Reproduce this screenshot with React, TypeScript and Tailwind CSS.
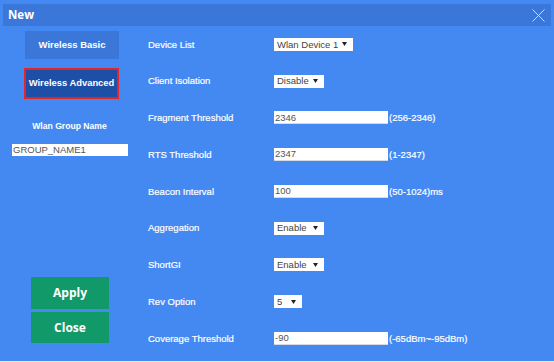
const ARIAL = "font-['Liberation_Sans',Arial,sans-serif]";
const OPEN = "font-['Open_Sans','Segoe_UI',sans-serif]";

type Row =
  | { label: string; kind: 'select'; value: string; width: string }
  | { label: string; kind: 'input'; value: string; hint: string };

const ROWS: Row[] = [
  { label: 'Device List', kind: 'select', value: 'Wlan Device 1', width: 'w-[79px]' },
  { label: 'Client Isolation', kind: 'select', value: 'Disable', width: 'w-[50px]' },
  { label: 'Fragment Threshold', kind: 'input', value: '2346', hint: '(256-2346)' },
  { label: 'RTS Threshold', kind: 'input', value: '2347', hint: '(1-2347)' },
  { label: 'Beacon Interval', kind: 'input', value: '100', hint: '(50-1024)ms' },
  { label: 'Aggregation', kind: 'select', value: 'Enable', width: 'w-[50px]' },
  { label: 'ShortGI', kind: 'select', value: 'Enable', width: 'w-[50px]' },
  { label: 'Rev Option', kind: 'select', value: '5', width: 'w-[28px]' },
  { label: 'Coverage Threshold', kind: 'input', value: '-90', hint: '(-65dBm~-95dBm)' },
];

function Arrow() {
  return (
    <svg width="5" height="4" viewBox="0 0 5 4" className="shrink-0">
      <path d="M0 0H5L2.5 4Z" fill="#222" />
    </svg>
  );
}

function Field({ row }: { row: Row }) {
  if (row.kind === 'select') {
    return (
      <div
        className={`${row.width} h-[13px] bg-white flex items-center justify-between pl-[3px] pr-[6px] text-[9.5px] leading-none text-[#444]`}
      >
        <span>{row.value}</span>
        <Arrow />
      </div>
    );
  }
  return (
    <div className="flex items-center">
      <div className="w-[114px] h-[13px] bg-white border-b border-[#d5dbe5] flex items-center pl-[1px] text-[9.5px] leading-none text-[#555]">
        {row.value}
      </div>
      <span className="ml-[1px] text-[9.5px] leading-none text-white [-webkit-text-stroke:0.2px_white]">{row.hint}</span>
    </div>
  );
}

export default function App() {
  return (
    <div className={`w-[554px] h-[362px] bg-[#4488f2] flex flex-col pt-[4px] border-b border-[#dbe7fb] ${ARIAL}`}>
      <div className="mx-[3px] h-[22px] bg-[#3b77d8] flex items-center justify-between pl-[5px] pr-[6px]">
        <span className={`${OPEN} text-[11.5px] font-bold text-white leading-none`}>New</span>
        <svg width="13" height="13" viewBox="0 0 13 13" className="mt-[1px]">
          <path d="M0.5 0.5L12.5 12.5M12.5 0.5L0.5 12.5" stroke="#c9dbf6" strokeWidth="1" />
        </svg>
      </div>

      <div className="flex-1 flex">
        <div className="w-[140px] flex flex-col items-start pt-[5px] pb-[18px]">
          <button className="ml-[25px] w-[94px] h-[28px] bg-[#3b77d8] text-white font-bold text-[9.5px]">
            Wireless Basic
          </button>
          <button className="ml-[24px] mt-[9px] w-[95px] h-[31px] bg-[#1d4fa6] border-2 border-[#e0262c] text-white font-bold text-[9.4px]">
            Wireless Advanced
          </button>
          <div className="w-full pr-[1px] mt-[22px] h-[10px] leading-[10px] text-center text-white font-bold text-[8.6px]">
            Wlan Group Name
          </div>
          <div className="ml-[12px] mt-[13px] w-[116px] h-[12px] bg-white flex items-center pl-[1px] text-[9.5px] leading-none text-[#555]">
            GROUP_NAME1
          </div>
          <button className={`${OPEN} mt-auto ml-[31px] w-[78px] h-[32px] bg-[#12996a] text-white font-bold text-[12px]`}>
            Apply
          </button>
          <button className={`${OPEN} mt-[3px] ml-[31px] w-[78px] h-[31px] bg-[#12996a] text-white font-bold text-[12px]`}>
            Close
          </button>
        </div>

        <div className="flex-1 pl-[8px] flex flex-col">
          {ROWS.map((row) => (
            <div key={row.label} className="h-[36.75px] flex items-center">
              <span className="w-[126px] text-white text-[9.5px] leading-none [-webkit-text-stroke:0.2px_white]">
                {row.label}
              </span>
              <Field row={row} />
            </div>
          ))}
        </div>
      </div>
    </div>
  );
}
